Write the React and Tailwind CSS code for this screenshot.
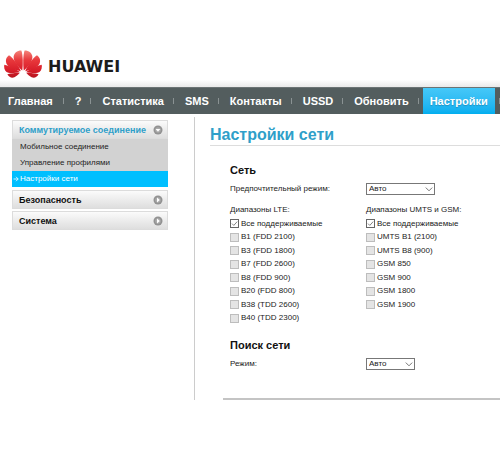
import React from "react";

const navItems = ["Главная", "?", "Статистика", "SMS", "Контакты", "USSD", "Обновить"];

const lteBands = [
  "B1 (FDD 2100)",
  "B3 (FDD 1800)",
  "B7 (FDD 2600)",
  "B8 (FDD 900)",
  "B20 (FDD 800)",
  "B38 (TDD 2600)",
  "B40 (TDD 2300)"
];

const gsmBands = ["UMTS B1 (2100)", "UMTS B8 (900)", "GSM 850", "GSM 900", "GSM 1800", "GSM 1900"];

const Petals = () => (
  <>
    <path d="M18.2 20.6C19 15 19.2 6 17.4 0.4C13 0.4 9.8 3 9.6 7C9.5 12 14.4 17 18.2 20.6Z" />
    <path d="M16.8 21.2C14.6 15.5 9.6 8.4 5 5.2C1.8 7.4 1 11 3 14.6C5.4 18.4 12 20.4 16.8 21.2Z" />
    <path d="M15.8 22C11.2 18.8 5 15.6 0.3 14.8C-0.3 18.6 1 22 4.4 22.8C7.8 23.4 12.4 22.8 15.8 22Z" />
    <path d="M15.8 22.8C11.4 22.8 7 23.4 3.4 24.2C5 27 7.6 28.4 10.4 27.2C12.6 26.2 14.4 24.6 15.8 22.8Z" />
  </>
);

const Logo = () => (
  <div className="flex items-end gap-[6px]">
    <svg viewBox="0 0 38 29" className="w-[38px] h-[29px]" aria-hidden="true">
      <defs>
        <linearGradient id="petal" x1="0" y1="0" x2="0" y2="29" gradientUnits="userSpaceOnUse">
          <stop offset="0" stopColor="#f4877c" />
          <stop offset="0.35" stopColor="#e8383c" />
          <stop offset="0.7" stopColor="#d81e2a" />
          <stop offset="1" stopColor="#b0141e" />
        </linearGradient>
      </defs>
      <g fill="url(#petal)">
        <Petals />
        <g transform="translate(38 0) scale(-1 1)">
          <Petals />
        </g>
      </g>
    </svg>
    <span className="font-['DejaVu_Sans',sans-serif] font-bold text-[16px] leading-[24px] text-[#1c1c1c]">HUAWEI</span>
  </div>
);

const MenuHeader = ({ title, open }) => (
  <button
    className={`flex w-full items-center justify-between h-[19px] pl-[6px] pr-[4px] border border-[#dcdcdc] bg-linear-to-b from-[#fbfbfb] to-[#dedede] text-[9px] leading-[12px] font-bold whitespace-nowrap ${
      open ? "text-[#2f9fc9]" : "text-[#111111]"
    }`}
  >
    {title}
    <svg viewBox="0 0 10 10" className="w-[10px] h-[10px] shrink-0" aria-hidden="true">
      <circle cx="5" cy="5" r="4.5" fill="#929292" />
      <circle cx="5" cy="5" r="2.8" fill="#aaaaaa" />
      <path d={open ? "M2.6 4H7.4L5 6.8Z" : "M4 2.6V7.4L6.8 5Z"} fill="#ffffff" />
    </svg>
  </button>
);

const Check = ({ label, checked }) => (
  <label className="flex items-center gap-[2px]">
    <span className="relative flex">
      <input
        type="checkbox"
        defaultChecked={checked}
        disabled={!checked}
        className="appearance-none w-[9px] h-[9px] border border-[#bdbdbd] bg-[#e4e4e4] checked:border-[#666666] checked:bg-white"
      />
      {checked && (
        <svg viewBox="0 0 9 9" className="absolute inset-0 w-[9px] h-[9px] pointer-events-none" aria-hidden="true">
          <path d="M2 4.6L3.8 6.4L7.2 2.6" fill="none" stroke="#666666" strokeWidth="0.8" />
        </svg>
      )}
    </span>
    {label}
  </label>
);

const BandList = ({ title, bands }) => (
  <fieldset>
    <legend className="mb-[1px]">{title}</legend>
    <div className="grid grid-rows-8 min-h-[108px]">
      <Check label="Все поддерживаемые" checked />
      {bands.map((band) => (
        <Check key={band} label={band} />
      ))}
    </div>
  </fieldset>
);

const Select = ({ id, width }) => (
  <div className={`relative ${width}`}>
    <select
      id={id}
      className="block appearance-none w-full h-[12px] pl-[2px] border border-[#777777] bg-white text-[8px] leading-[10px] text-[#222222]"
    >
      <option>Авто</option>
    </select>
    <svg viewBox="0 0 8 5" className="absolute right-[2px] top-[4px] w-[8px] h-[5px] pointer-events-none" aria-hidden="true">
      <path d="M0.8 0.6L4 3.8L7.2 0.6" fill="none" stroke="#666666" strokeWidth="0.9" />
    </svg>
  </div>
);

export default function App() {
  return (
    <div className="bg-white pt-[50px] overflow-hidden font-['Liberation_Sans',Arial,sans-serif] text-[8px] leading-[12px] text-[#222222]">
      <header className="h-[37px] pl-[4px] bg-linear-to-b from-white from-80% to-[#e9e9e9]">
        <Logo />
      </header>

      <nav className="flex items-center h-[27px] bg-[#535d5e] border-t border-[#6b7374] text-[11px] leading-[14px] font-bold text-white whitespace-nowrap">
        {navItems.map((item, idx) => (
          <React.Fragment key={item}>
            <a href="#" className={idx === 0 ? "pl-[8px] pr-[10px]" : "pl-[11px] pr-[9px]"}>
              {item}
            </a>
            <span className="w-px h-[6px] shrink-0 bg-[#8a9293]" />
          </React.Fragment>
        ))}
        <a
          href="#"
          aria-current="page"
          className="flex items-center self-stretch mx-[4px] px-[7px] bg-linear-to-b from-[#45c8f8] to-[#00aeef] text-shadow-xs"
        >
          Настройки
        </a>
        <span className="w-px h-[6px] shrink-0 bg-[#8a9293]" />
      </nav>

      <div className="flex pt-[3px]">
        <aside className="w-[39%] shrink-0 border-r border-[#cccccc] pl-[12px] pr-[26px] pt-[3px]">
          <MenuHeader title="Коммутируемое соединение" open />
          <ul className="bg-[#d2d2d2] leading-[16px] mb-[3px]">
            <li className="pl-[8px]">
              <a href="#">Мобильное соединение</a>
            </li>
            <li className="pl-[8px]">
              <a href="#">Управление профилями</a>
            </li>
            <li className="bg-[#00bfff] text-white">
              <a href="#" className="flex items-center pl-[1px] gap-[1px]">
                <svg viewBox="0 0 6 6" className="w-[6px] h-[6px]" aria-hidden="true">
                  <path d="M0.5 3H5.2M3 0.8L5.2 3L3 5.2" fill="none" stroke="#ffffff" strokeWidth="0.8" />
                </svg>
                Настройки сети
              </a>
            </li>
          </ul>
          <div className="flex flex-col gap-[2px]">
            <MenuHeader title="Безопасность" />
            <MenuHeader title="Система" />
          </div>
        </aside>

        <main className="flex-1 pt-[8px] pl-[15px]">
          <h1 className="text-[16px] leading-[20px] font-bold text-[#2f9fc9] border-b border-[#dddddd]">Настройки сети</h1>

          <form className="pl-[20px]">
            <h2 className="mt-[16px] text-[11px] leading-[16px] font-bold text-[#111111]">Сеть</h2>
            <div className="grid grid-cols-[136px_1fr] items-center mt-[5px]">
              <label htmlFor="mode">Предпочтительный режим:</label>
              <Select id="mode" width="w-[69px]" />
            </div>

            <div className="grid grid-cols-[136px_1fr] mt-[9px] whitespace-nowrap">
              <BandList title="Диапазоны LTE:" bands={lteBands} />
              <BandList title="Диапазоны UMTS и GSM:" bands={gsmBands} />
            </div>

            <h2 className="mt-[12px] text-[11px] leading-[16px] font-bold text-[#111111]">Поиск сети</h2>
            <div className="grid grid-cols-[136px_1fr] items-center mt-[5px]">
              <label htmlFor="search">Режим:</label>
              <Select id="search" width="w-[49px]" />
            </div>
          </form>

          <hr className="mt-[28px] ml-[13px] border-t-2 border-[#c4c4c4]" />
        </main>
      </div>
    </div>
  );
}
